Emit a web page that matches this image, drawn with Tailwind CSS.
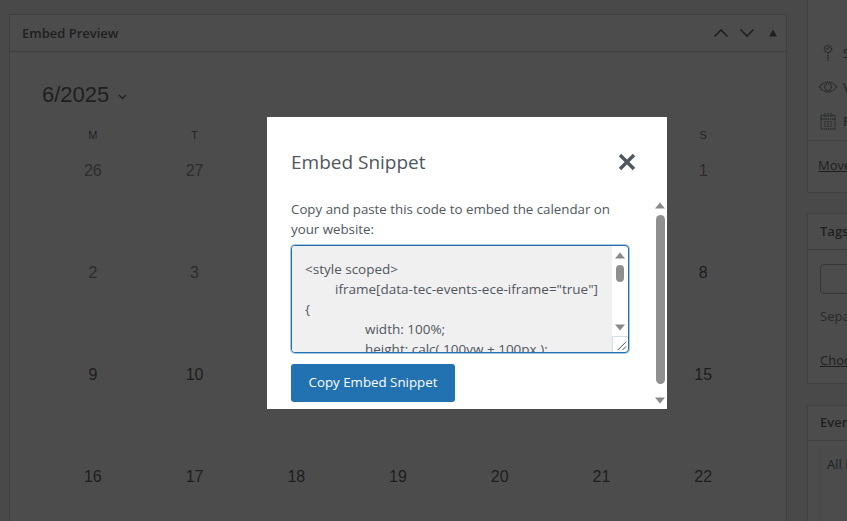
<!DOCTYPE html>
<html lang="en">
<head>
  <meta charset="UTF-8" />
  <meta name="viewport" content="width=device-width, initial-scale=1.0" />
  <title>Embed Preview</title>
  <script src="https://cdn.jsdelivr.net/npm/@tailwindcss/browser@4"></script>
</head>
<body class="relative h-[521px] w-[847px] overflow-hidden bg-[#f0f0f1] font-['Open_Sans',sans-serif] text-[#1d2327]">
  <!-- page behind the dialog -->
  <div class="flex h-full items-start pl-[9px]">
    <div class="mt-[14px] h-[520px] w-[778px] shrink-0 border border-[#c3c4c7] bg-white">
      <div class="flex h-[37px] items-center justify-between border-b border-[#c3c4c7] pl-3 pr-2">
        <h2 class="pt-px text-[13px] font-semibold">Embed Preview</h2>
        <div class="flex items-center">
          <svg class="h-[10px] w-[16px]" viewBox="0 0 16 10" fill="none" stroke="#1d2327" stroke-width="1.6"><path d="M1.5 8.5 8 2l6.5 6.5"/></svg>
          <svg class="ml-[10px] h-[10px] w-[16px]" viewBox="0 0 16 10" fill="none" stroke="#1d2327" stroke-width="1.6"><path d="M1.5 1.5 8 8l6.5-6.5"/></svg>
          <svg class="ml-[14px] mr-[1px] h-[8px] w-[8px]" viewBox="0 0 8 8" fill="#1d2327"><path d="M4 0.5 8 7.5H0z"/></svg>
        </div>
      </div>
      <div class="px-[32px] font-['Liberation_Sans',sans-serif]">
        <div class="mt-[29px] flex h-[28px] items-center text-[22px] leading-none text-[#222]">
          6/2025
          <svg class="ml-[9px] mt-[3px] h-[6px] w-[9px]" viewBox="0 0 9 6" fill="none" stroke="#222" stroke-width="1.3"><path d="M1 1l3.5 3.500L8 1"/></svg>
        </div>
        <div class="mt-[18px] grid w-[712px] grid-cols-7 text-center text-[11px] leading-[16px] text-[#333]">
          <div>M</div><div>T</div><div>W</div><div>T</div><div>F</div><div>S</div><div>S</div>
        </div>
        <div class="mt-[18px] grid w-[712px] grid-cols-7 grid-rows-[repeat(4,102px)] text-center text-[16px] leading-[20px] text-[#141414]">
          <div class="text-[#5e5e5e]">26</div><div class="text-[#5e5e5e]">27</div><div class="text-[#5e5e5e]">28</div><div class="text-[#5e5e5e]">29</div><div class="text-[#5e5e5e]">30</div><div class="text-[#5e5e5e]">31</div><div class="text-[#5e5e5e]">1</div>
          <div class="text-[#5e5e5e]">2</div><div class="text-[#5e5e5e]">3</div><div>4</div><div>5</div><div>6</div><div>7</div><div>8</div>
          <div>9</div><div>10</div><div>11</div><div>12</div><div>13</div><div>14</div><div>15</div>
          <div>16</div><div>17</div><div>18</div><div>19</div><div>20</div><div>21</div><div>22</div>
        </div>
      </div>
    </div>

    <div class="ml-[20px] flex w-[280px] shrink-0 flex-col">
      <div class="h-[193px] border border-t-0 border-[#c3c4c7] bg-white">
        <div class="flex flex-col gap-[13px] pl-[10px] pt-[42px] text-[13px] leading-[20px]">
          <div class="flex h-[21px] items-center gap-[5px]">
            <svg class="h-[20px] w-[20px]" viewBox="0 0 20 20" fill="none" stroke="#50575e" stroke-width="1.5" stroke-dasharray="1.6 .7"><circle cx="10" cy="6" r="3.6"/><path d="M10 9.5v8"/><path d="M8.5 6l3-1.500"/></svg>
            <span>Status: Draft</span>
          </div>
          <div class="flex h-[21px] items-center gap-[5px]">
            <svg class="h-[20px] w-[20px]" viewBox="0 0 20 20" fill="none" stroke="#50575e" stroke-width="1.400" stroke-dasharray="1.6 .6"><path d="M1.500 10C4 6.500 7 5 10 5s6 1.500 8.500 5c-2.500 3.500-5.500 5-8.500 5s-6-1.500-8.500-5z"/><circle cx="10" cy="10" r="3.400"/></svg>
            <span>Visibility: Public</span>
          </div>
          <div class="flex h-[21px] items-center gap-[5px]">
            <svg class="h-[20px] w-[20px]" viewBox="0 0 20 20" fill="none" stroke="#50575e" stroke-width="1.300" stroke-dasharray="1.500 .7"><path d="M3 4.500h14V18H3z"/><path d="M3 8h14M7 2v4M10 2v4M13 2v4M7 10v6M10 10v6M13 10v6"/></svg>
            <span>Publish immediately</span>
          </div>
        </div>
        <div class="mt-[9px] border-t border-[#dcdcde] pl-[10px] pt-[14px] text-[13px] leading-[20px] underline">Move to Trash</div>
      </div>

      <div class="mt-[20px] h-[171px] border border-[#c3c4c7] bg-white">
        <div class="flex h-[36px] items-center border-b border-[#c3c4c7] pl-3 text-[13px] font-semibold">Tags</div>
        <div class="px-3 text-[13px] leading-[20px] text-[#50575e]">
          <div class="mt-[14px] h-[30px] rounded-[4px] border border-[#8c8f94]"></div>
          <div class="mt-[12px]">Separate tags with commas</div>
          <div class="mt-[24px] text-[#1d2327] underline">Choose from the most used tags</div>
        </div>
      </div>

      <div class="mt-[21px] h-[140px] border border-[#c3c4c7] bg-white">
        <div class="flex h-[35px] items-center border-b border-[#c3c4c7] pl-3 text-[13px] font-semibold">Event Categories</div>
        <div class="mx-3 mt-[8px] h-[90px] border border-[#f0f0f1] px-[6px] pt-[4px] text-[13px] leading-[20px]">All Events</div>
      </div>
    </div>
  </div>

  <div class="absolute inset-0 bg-[#1f1f1f]/80"></div>

  <!-- dialog -->
  <div class="absolute left-[267px] top-[117px] flex h-[292px] w-[400px] overflow-hidden bg-white text-[#50575e]">
    <div class="w-[388px] shrink-0 pl-[24px]">
      <div class="mt-[30px] flex h-[30px] w-[346px] items-center justify-between">
        <h1 class="text-[19px] leading-[30px]">Embed Snippet</h1>
        <svg class="mr-[1px] h-[18px] w-[18px]" viewBox="0 0 18 18" fill="none" stroke="#50575e" stroke-width="3.400"><path d="M2 2l14 14M16 2 2 16"/></svg>
      </div>
      <p class="mt-[22px] w-[340px] text-[13.300px] leading-[20px]">Copy and paste this code to embed the calendar on your website:</p>
      <div class="relative mt-[6px] flex h-[108px] w-[338px] overflow-hidden rounded-[4px] border border-[#2271b1] bg-white ring-1 ring-[#2271b1]/40">
        <div class="h-full w-[320px] shrink-0 overflow-hidden whitespace-pre-wrap bg-[#f0f0f1] pl-[13px] pr-[12px] pt-[13px] text-[13.500px] leading-[20px] [tab-size:30px]">&lt;style scoped&gt;
	iframe[data-tec-events-ece-iframe="true"] {
		width: 100%;
		height: calc( 100vw + 100px );
	}
&lt;/style&gt;</div>
        <div class="flex w-[16px] flex-col items-center pr-[1px] pt-[6px]">
          <svg class="h-[7px] w-[10px]" viewBox="0 0 10 6" fill="#8a8a8a"><path d="M5 0l5 6H0z"/></svg>
          <div class="mt-[6px] h-[17px] w-[8px] rounded-full bg-[#8f8f8f]"></div>
          <svg class="mt-[42px] h-[7px] w-[10px]" viewBox="0 0 10 6" fill="#8a8a8a"><path d="M5 6 0 0h10z"/></svg>
        </div>
        <svg class="absolute bottom-0 right-0 h-[16px] w-[16px] border-l border-t border-[#cfe3e8]" viewBox="0 0 16 16" fill="none" stroke="#444" stroke-width="1"><path d="M5 14 14 5M10 14l4-4"/></svg>
      </div>
      <button class="mt-[11px] block h-[38px] w-[164px] rounded-[3px] bg-[#2271b1] text-center text-[13.300px] text-white">Copy Embed Snippet</button>
    </div>
    <div class="flex flex-1 flex-col items-center pt-[85px] pr-[3px]">
      <svg class="h-[7px] w-[10px]" viewBox="0 0 10 6" fill="#8a8a8a"><path d="M5 0l5 6H0z"/></svg>
      <div class="mt-[6px] h-[169px] w-[9px] rounded-full bg-[#8f8f8f]"></div>
      <svg class="mt-[13px] h-[7px] w-[10px]" viewBox="0 0 10 6" fill="#8a8a8a"><path d="M5 6 0 0h10z"/></svg>
    </div>
  </div>
</body>
</html>
